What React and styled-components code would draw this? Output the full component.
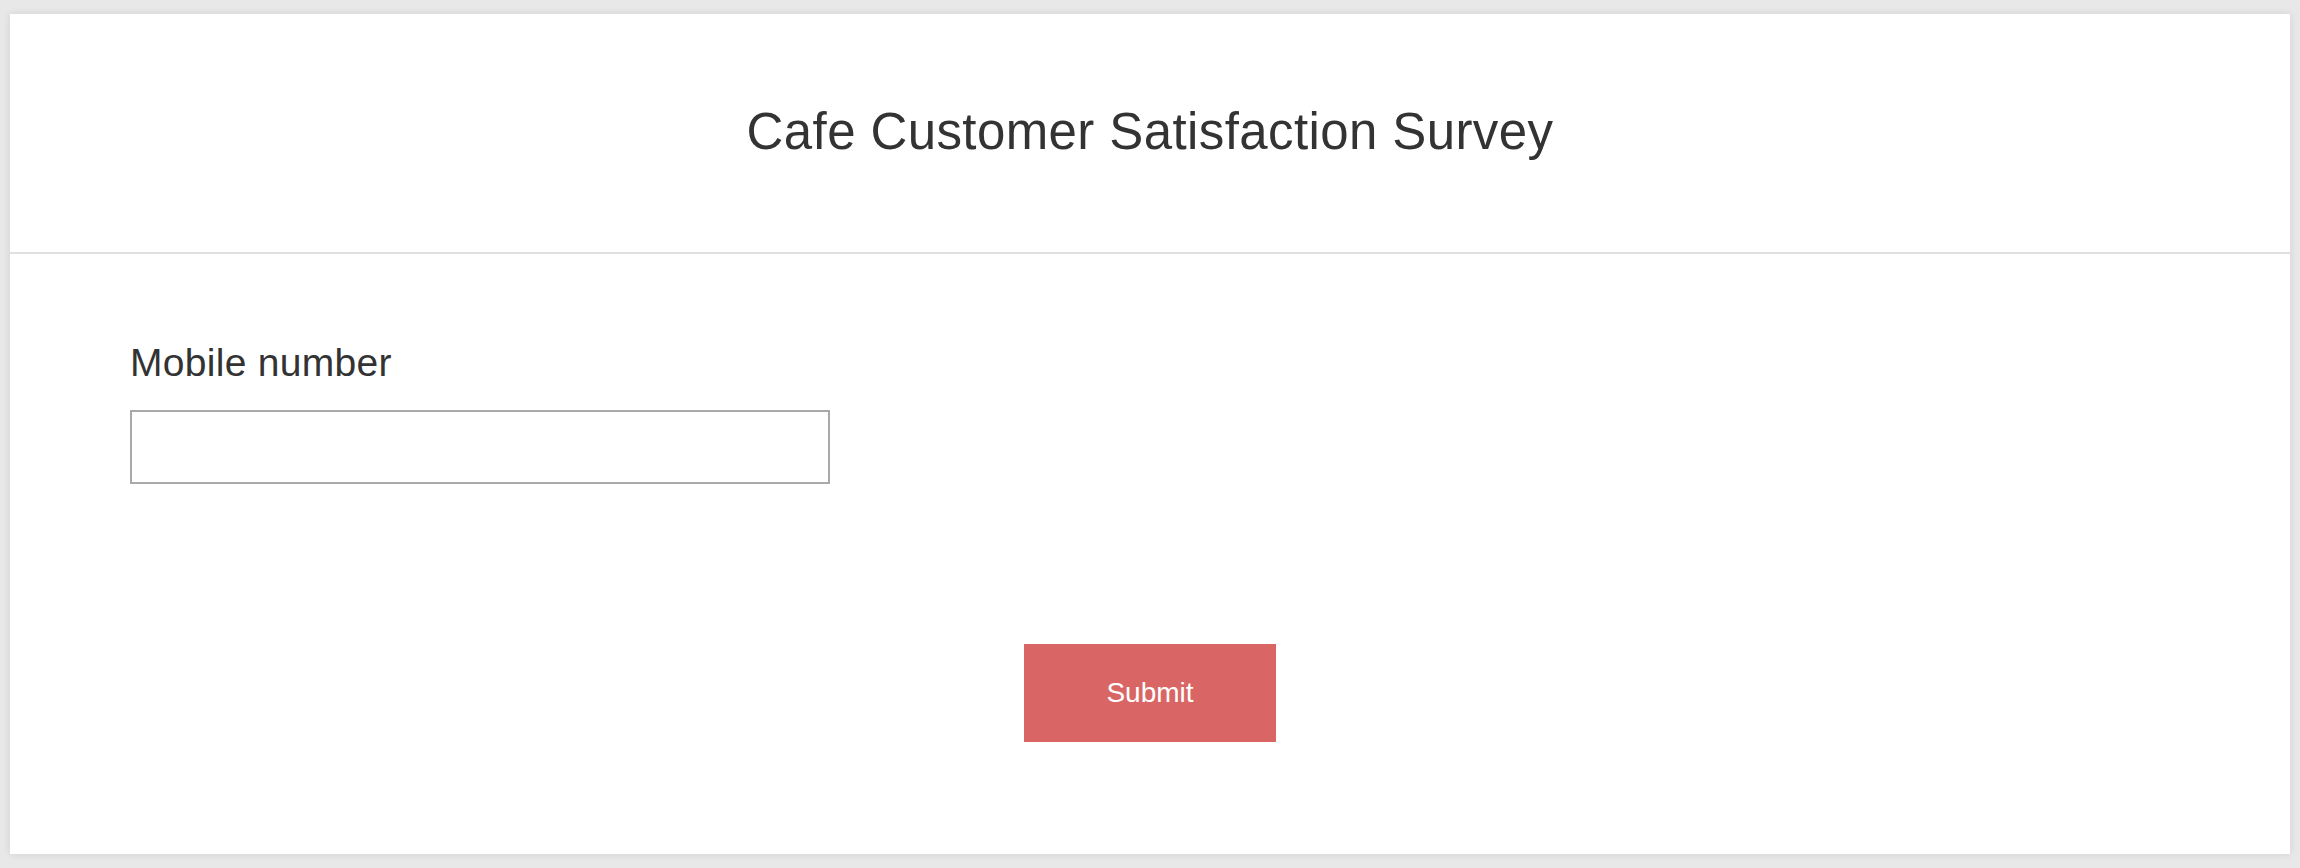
import React from "react";
import styled, { createGlobalStyle } from "styled-components";

const GlobalStyle = createGlobalStyle`
  html, body {
    margin: 0;
    padding: 0;
    background: #e8e8e8;
    font-family: "Liberation Sans", Arial, Helvetica, sans-serif;
  }
  * { box-sizing: border-box; }
`;

const Page = styled.div`
  padding: 14px 10px;
  min-height: 868px;
`;

const Card = styled.form`
  background: #ffffff;
  box-shadow: 0 0 8px rgba(0, 0, 0, 0.1);
  display: flex;
  flex-direction: column;
`;

const Header = styled.header`
  padding: 90px 0 92px;
  border-bottom: 2px solid #e0e0e0;
  display: flex;
  justify-content: center;
`;

const Title = styled.h1`
  margin: 0;
  font-size: 51px;
  line-height: 56px;
  font-weight: 400;
  letter-spacing: 0.4px;
  color: #333333;
`;

const Body = styled.div`
  padding: 88px 120px 112px;
  display: flex;
  flex-direction: column;
`;

const Field = styled.div`
  display: flex;
  flex-direction: column;
  align-items: flex-start;
`;

const Label = styled.label`
  font-size: 39px;
  line-height: 42px;
  letter-spacing: 0.3px;
  color: #333333;
  margin-bottom: 26px;
`;

const Input = styled.input`
  width: 700px;
  height: 74px;
  border: 2px solid #a9a9a9;
  border-radius: 0;
  background: #ffffff;
  padding: 0 16px;
  font-family: inherit;
  font-size: 28px;
  color: #333333;
  outline: none;
`;

const Actions = styled.div`
  display: flex;
  justify-content: center;
  margin-top: 160px;
`;

const SubmitButton = styled.button`
  width: 252px;
  height: 98px;
  border: none;
  border-radius: 0;
  background: #d96664;
  color: #ffffff;
  font-family: inherit;
  font-size: 28px;
  cursor: pointer;
`;

export default function App() {
  return (
    <>
      <GlobalStyle />
      <Page>
        <Card onSubmit={(e) => e.preventDefault()}>
          <Header>
            <Title>Cafe Customer Satisfaction Survey</Title>
          </Header>
          <Body>
            <Field>
              <Label htmlFor="mobile">Mobile number</Label>
              <Input id="mobile" type="tel" />
            </Field>
            <Actions>
              <SubmitButton type="submit">Submit</SubmitButton>
            </Actions>
          </Body>
        </Card>
      </Page>
    </>
  );
}
